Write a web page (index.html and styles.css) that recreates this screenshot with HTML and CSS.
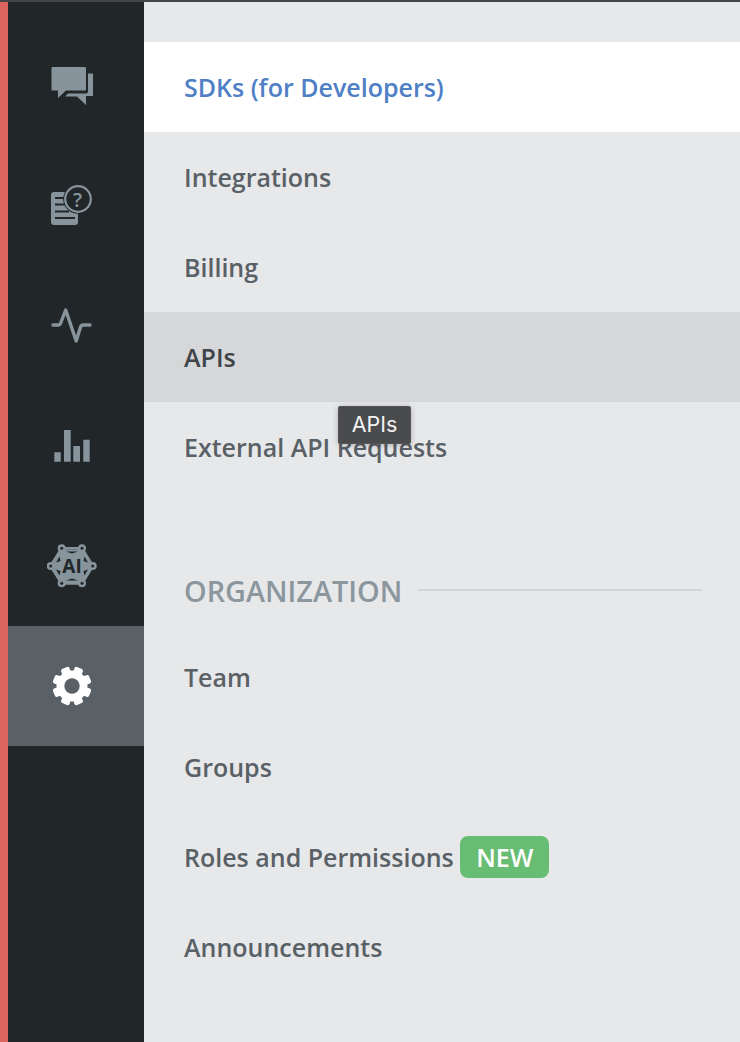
FILE: index.html
```html
<!DOCTYPE html>
<html lang="en">
<head>
<meta charset="utf-8">
<title>Settings</title>
<link rel="stylesheet" href="styles.css">
</head>
<body>
<div class="app">
  <nav class="rail">
    <a class="rail-item">
      <svg class="ico" width="44" height="40" viewBox="50 66 44 40"><path class="f" d="M51.500 68a1 1 0 0 1 1-1H85a1 1 0 0 1 1 1v21.500a1 1 0 0 1-1 1H66L58 98v-7.500h-5.500a1 1 0 0 1-1-1z"/><path class="f" d="M88 73.500h4.500a.5.500 0 0 1 .5.500v21.500a.5.500 0 0 1-.5.500H86v9l-9-8.500H65l3-3h18a2 2 0 0 0 2-2z"/></svg>
    </a>
    <a class="rail-item">
      <svg class="ico" width="44" height="42" viewBox="50 186 44 42"><rect class="f" x="51" y="193" width="27" height="33" rx="3"/><path class="k" d="M55 199h14M55 205.500h14M55 212.500h14M55 219h20" stroke-width="2.200"/><circle class="cut" cx="78" cy="200" r="14.800"/><circle class="s" cx="78" cy="200" r="12.800" stroke-width="2.200" fill="none"/><text class="q" x="77.500" y="207.500" text-anchor="middle">?</text></svg>
    </a>
    <a class="rail-item">
      <svg class="ico" width="44" height="40" viewBox="50 306 44 40"><path class="s" d="M53 325h5c1.500 0 2.200-.5 2.700-2l5-13 10.500 31 4-13c.5-2 1.200-3 2.800-3H90" stroke-width="3.400" fill="none" stroke-linecap="round" stroke-linejoin="round"/></svg>
    </a>
    <a class="rail-item">
      <svg class="ico" width="44" height="36" viewBox="50 428 44 36"><path class="f" d="M54.300 452.300h6.400v9.400h-6.400zM64 430h6.700v31.700H64zM73.300 446H80v15.700h-6.700zM83.300 439.700h6.400v22h-6.400z"/></svg>
    </a>
    <a class="rail-item">
      <svg class="ico" width="50" height="46" viewBox="47 543 50 46"><path class="s" d="M61.700 548.300H82L92.700 566 82 583.300H61.700L50.700 566z" stroke-width="2.800" fill="none"/><path class="f" d="M60 550h24l7 16-7 16H60l-7-16z"/><path class="tri" d="M56 562.500l3.500-6 1 4.500zM88 562.500l-3.500-6-1 4.500zM56 569.500l3.500 6 1-4.500zM88 569.500l-3.500 6-1-4.500zM66 551.500h12l-6 2zM66 580.500h12l-6-2z"/><g class="nodes"><circle cx="61.700" cy="548.300" r="4"/><circle cx="82" cy="548.300" r="4"/><circle cx="50.700" cy="566" r="4"/><circle cx="92.700" cy="566" r="4"/><circle cx="61.700" cy="583.300" r="4"/><circle cx="82" cy="583.300" r="4"/></g><g class="holes"><circle cx="61.700" cy="548.300" r="1.500"/><circle cx="82" cy="548.300" r="1.500"/><circle cx="50.700" cy="566" r="1.500"/><circle cx="92.700" cy="566" r="1.500"/><circle cx="61.700" cy="583.300" r="1.500"/><circle cx="82" cy="583.300" r="1.500"/></g><text class="ai" x="72" y="573" text-anchor="middle">AI</text></svg>
    </a>
    <a class="rail-item active">
      <svg class="ico" width="40" height="40" viewBox="52 666 40 40"><g class="w"><circle cx="72" cy="686" r="15.500"/><rect x="67.500" y="666.500" width="9" height="7" rx="2" transform="rotate(22.500 72 686)"/><rect x="67.500" y="666.500" width="9" height="7" rx="2" transform="rotate(67.500 72 686)"/><rect x="67.500" y="666.500" width="9" height="7" rx="2" transform="rotate(112.500 72 686)"/><rect x="67.500" y="666.500" width="9" height="7" rx="2" transform="rotate(157.500 72 686)"/><rect x="67.500" y="666.500" width="9" height="7" rx="2" transform="rotate(202.500 72 686)"/><rect x="67.500" y="666.500" width="9" height="7" rx="2" transform="rotate(247.500 72 686)"/><rect x="67.500" y="666.500" width="9" height="7" rx="2" transform="rotate(292.500 72 686)"/><rect x="67.500" y="666.500" width="9" height="7" rx="2" transform="rotate(337.500 72 686)"/></g><circle class="hole" cx="72" cy="686" r="7.700"/></svg>
    </a>
  </nav>
  <main class="menu">
    <a class="item current">SDKs (for Developers)</a>
    <a class="item">Integrations</a>
    <a class="item">Billing</a>
    <a class="item hover">APIs</a>
    <a class="item">External API Requests</a>
    <div class="section"><span class="section-title">ORGANIZATION</span><span class="rule"></span></div>
    <a class="item">Team</a>
    <a class="item">Groups</a>
    <a class="item">Roles and Permissions <span class="badge">NEW</span></a>
    <a class="item">Announcements</a>
    <div class="tooltip">APIs</div>
  </main>
</div>
</body>
</html>
```
FILE: styles.css
```css
* { box-sizing: border-box; }
html, body { margin: 0; height: 100%; overflow: hidden; }
body { background: #e7e8ea; font-family: "Open Sans", "Noto Sans", sans-serif; }
.app { display: flex; height: 1042px; border-top: 2px solid #434445; }
.rail { width: 144px; flex: none; background: #212629; border-left: 8px solid #dc6560; padding-top: 24px; display: flex; flex-direction: column; }
.rail-item { height: 120px; flex: none; display: flex; align-items: center; justify-content: center; padding-right: 8px; }
.rail-item.active { background: #596066; }
.ico { display: block; }
.f { fill: #87949c; }
.s { stroke: #87949c; }
.k { stroke: #212629; fill: none; }
.cut { fill: #212629; }
.tri { fill: #212629; }
.q { fill: #87949c; font: 600 20px "Open Sans", sans-serif; }
.nodes { fill: #87949c; }
.holes { fill: #212629; }
.ai { fill: #212629; font: 700 19px "Open Sans", sans-serif; }
.w { fill: #fff; }
.hole { fill: #596066; }
.menu { position: relative; flex: 1; padding-top: 40px; }
.item { display: flex; align-items: center; height: 90px; padding-left: 40px; font-size: 25px; font-weight: 600; color: #596066; white-space: pre; }
.item.current { background: #fff; color: #4f80c6; }
.item.hover { background: #d6d7d9; color: #3f4448; }
.section { margin: 0 38px 0 40px; padding-top: 55px; height: 140px; display: flex; align-items: center; gap: 16px; }
.section-title { font-size: 28.800px; font-weight: 600; color: #8b969d; margin-top: 2px; }
.rule { flex: 1; height: 2px; background: #d3d5d7; }
.badge { background: #68bd75; color: #fff; border-radius: 8px; height: 42px; width: 89px; display: inline-flex; align-items: center; justify-content: center; font-size: 25px; font-weight: 600; }
.tooltip { position: absolute; left: 194px; top: 404px; width: 73px; height: 38px; padding-bottom: 2px; background: #4a4b4d; border: 1px solid #555; border-radius: 2px; color: #f2f2f2; font: 400 21.500px Inter, sans-serif; display: flex; align-items: center; justify-content: center; box-shadow: 0 1px 6px rgba(0,0,0,.25); }
```
